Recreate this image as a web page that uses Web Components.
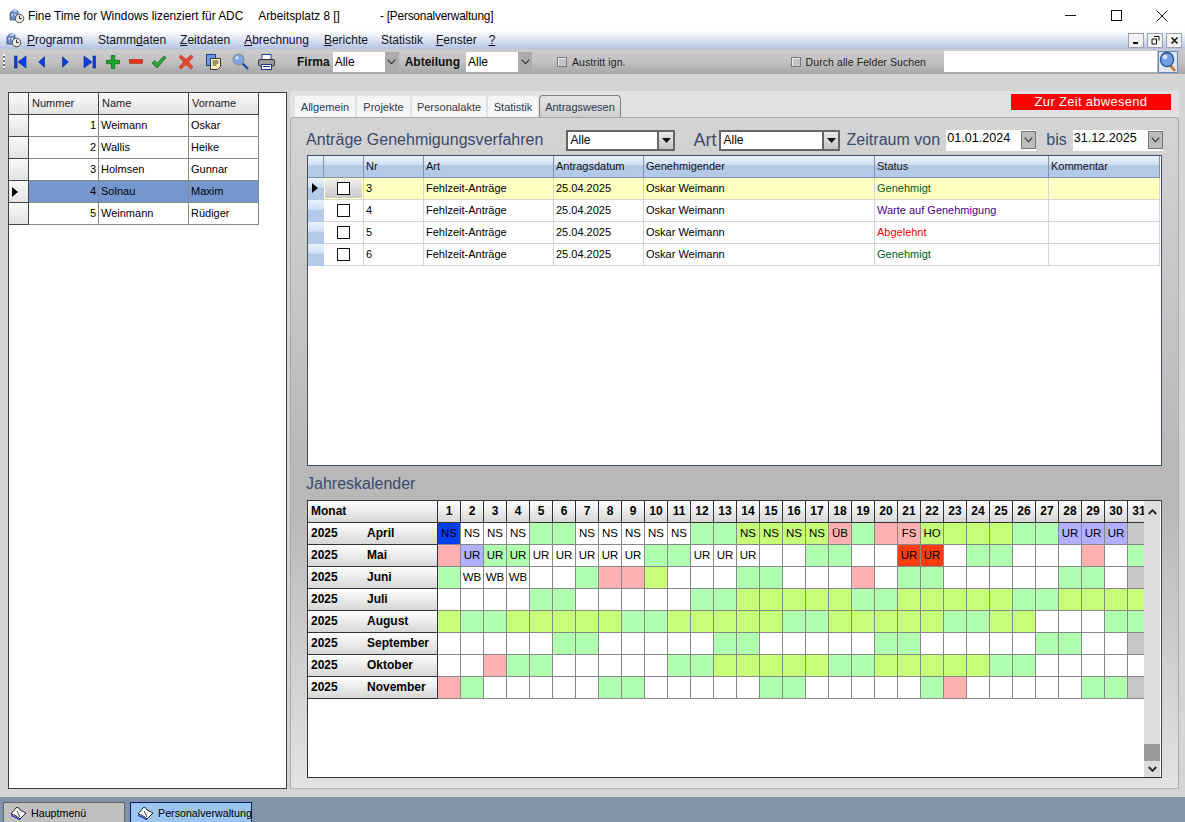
<!DOCTYPE html>
<html lang="de">
<head>
<meta charset="utf-8">
<title>Fine Time for Windows</title>
<style>
  html, body { margin: 0; height: 100%; overflow: hidden; }
  body {
    width: 1185px;
    height: 822px;
    display: flex;
    flex-direction: column;
    background: #d4d4d4;
    font: 11px "Liberation Sans", Arial, sans-serif;
    color: #000;
  }
</style>
</head>
<body>
<ft-titlebar></ft-titlebar>
<ft-menubar></ft-menubar>
<ft-toolbar></ft-toolbar>
<ft-workspace>
  <ft-employee-grid slot="left"></ft-employee-grid>
  <ft-tab-panel>
    <ft-filter-bar></ft-filter-bar>
    <ft-request-grid></ft-request-grid>
    <ft-section-title>Jahreskalender</ft-section-title>
    <ft-year-calendar></ft-year-calendar>
  </ft-tab-panel>
</ft-workspace>
<ft-taskbar></ft-taskbar>

<script>
const ICONS = {
  app: `<svg width="18" height="16" viewBox="0 0 18 16"><path d="M2 5l4-4 4 2v9H2z" fill="#6f8fc8" stroke="#2f3f66" stroke-width=".7"/><path d="M4 2l3-1 3 2-3 1z" fill="#c8d8f2"/><rect x="3.500" y="6" width="1.500" height="1.500" fill="#e8eef8"/><rect x="6.500" y="6" width="1.500" height="1.500" fill="#e8eef8"/><circle cx="11.500" cy="10.500" r="4.300" fill="#e9e9e4" stroke="#4c4c4c"/><path d="M11.500 7.600v3h2.400" fill="none" stroke="#222" stroke-width=".9"/></svg>`,
  first: `<svg width="13" height="14" viewBox="0 0 13 14"><rect x=".5" y="1" width="2.500" height="12" fill="#0a3fe6" stroke="#06237e" stroke-width=".6"/><path d="M12 1v12L4 7z" fill="#0a3fe6" stroke="#06237e" stroke-width=".6"/></svg>`,
  prev: `<svg width="7" height="12" viewBox="0 0 7 12"><path d="M6.500 .7v10.600L.7 6z" fill="#0a3fe6" stroke="#06237e" stroke-width=".6"/></svg>`,
  next: `<svg width="7" height="12" viewBox="0 0 7 12"><path d="M.5 .7v10.600L6.300 6z" fill="#0a3fe6" stroke="#06237e" stroke-width=".6"/></svg>`,
  last: `<svg width="13" height="14" viewBox="0 0 13 14"><path d="M1 1v12l8-6z" fill="#0a3fe6" stroke="#06237e" stroke-width=".6"/><rect x="10" y="1" width="2.500" height="12" fill="#0a3fe6" stroke="#06237e" stroke-width=".6"/></svg>`,
  plus: `<svg width="14" height="14" viewBox="0 0 14 14"><path d="M5.300 .5h3.400v4.800h4.800v3.400H8.700v4.800H5.300V8.700H.5V5.300h4.800z" fill="#1fa62c" stroke="#0c5c16" stroke-width=".7"/></svg>`,
  minus: `<svg width="14" height="5" viewBox="0 0 14 5"><rect x=".4" y=".6" width="13.200" height="3.800" fill="#e8321e" stroke="#a3291c" stroke-width=".6"/></svg>`,
  check: `<svg width="16" height="14" viewBox="0 0 16 14"><path d="M1 8l2.600-2.400 2.500 2.600L13.200 1 15 2.600 6.200 13z" fill="#2ea836" stroke="#1d5e24" stroke-width=".8"/></svg>`,
  cross: `<svg width="16" height="16" viewBox="0 0 16 16"><path d="M1 3l2-2 5 4.500L13 1l2 2-4.500 5 4.500 5-2 2-5-4.500L3 15l-2-2 4.500-5z" fill="#ee4628" stroke="#b03a2a" stroke-width=".7"/></svg>`,
  copy: `<svg width="15" height="16" viewBox="0 0 15 16"><rect x=".5" y=".5" width="9" height="11" fill="#6d98e6" stroke="#1f3c8c"/><path d="M4.500 4.500h10v8l-3 3h-7z" fill="#fdf7b8" stroke="#333"/><path d="M6.500 7h6M6.500 9h6M6.500 11h4" stroke="#333"/></svg>`,
  search: `<svg width="17" height="17" viewBox="0 0 17 17"><path d="M10 10l6 6" stroke="#1d4fa8" stroke-width="2.400"/><circle cx="6.500" cy="6.500" r="5.400" fill="#7ea6e6" stroke="#8a93a3" stroke-width="1.400"/><circle cx="5" cy="5" r="1.800" fill="#cfe0fa"/></svg>`,
  print: `<svg width="17" height="16" viewBox="0 0 17 16"><rect x="4" y=".5" width="9" height="6" fill="#fff" stroke="#1f3c8c"/><rect x=".5" y="5.500" width="16" height="6.500" rx="1.500" fill="#9b9b9b" stroke="#333"/><rect x="3.500" y="10.500" width="10" height="5" fill="#fff" stroke="#1f3c8c"/><path d="M5 12.500h7" stroke="#1f3c8c"/></svg>`,
  lens: `<svg width="20" height="22" viewBox="0 0 20 22"><rect x=".5" y=".5" width="19" height="21" fill="#dfe6f2" stroke="#5f86c6"/><path d="M12 14l5 6" stroke="#d86a1c" stroke-width="2.600"/><ellipse cx="9" cy="8.500" rx="6.600" ry="7" fill="#6f9fe6" stroke="#27518f" stroke-width="1.300"/><ellipse cx="7" cy="6" rx="2.400" ry="2.200" fill="#d8e6fb"/></svg>`,
  book: `<svg width="17" height="14" viewBox="0 0 17 14"><path d="M1 8l6-7c1.500 1 2.500 1.500 3 3l6 3-6 6c-2-2-5-4-9-5z" fill="#fff" stroke="#111" stroke-width=".9"/><path d="M7 5l3 6" stroke="#111" stroke-width=".8"/><path d="M1 9.500c4 1 7 3 9 4.500" fill="none" stroke="#1a22d0" stroke-width="1.200"/></svg>`,
};

class FtTitlebar extends HTMLElement {
  connectedCallback() {
    this.attachShadow({ mode: 'open' }).innerHTML = `
      <style>
        :host { display: flex; align-items: center; height: 31px; background: #fff; font-size: 11.850px; color: #000; flex: none; white-space: nowrap; }
        .logo { margin: 0 0 0 8px; width: 20px; display: flex; }
        .controls { margin-left: auto; display: flex; align-items: center; }
        .controls span { width: 46px; height: 29px; display: flex; align-items: center; justify-content: center; }
      </style>
      <span class="logo">${ICONS.app}</span>
      <span>Fine Time for Windows lizenziert für ADC</span>
      <span style="margin-left:15px">Arbeitsplatz 8 []</span>
      <span style="margin-left:40px;letter-spacing:-.2px">- [Personalverwaltung]</span>
      <span class="controls">
        <span><svg width="11" height="11"><path d="M0 5.500h11" stroke="#111"/></svg></span>
        <span><svg width="11" height="11"><rect x=".5" y=".5" width="10" height="10" fill="none" stroke="#111"/></svg></span>
        <span><svg width="12" height="12"><path d="M.5 .5l11 11M11.500 .5l-11 11" stroke="#111"/></svg></span>
      </span>
    `;
  }
}

class FtMenubar extends HTMLElement {
  connectedCallback() {
    const items = [
      ['P', 'rogramm', 27], ['Stamm', 'd', 'aten', 15], ['Z', 'eitdaten', 14], ['A', 'brechnung', 14],
      ['B', 'erichte', 15], ['Statistik', 13], ['F', 'enster', 13], ['?', '', 12],
    ];
    const link = (it) => {
      if (it.length === 2) return `<a style="margin-left:${it[1]}px">${it[0]}</a>`;
      if (it.length === 4) return `<a style="margin-left:${it[3]}px">${it[0]}<u>${it[1]}</u>${it[2]}</a>`;
      return `<a style="margin-left:${it[2]}px"><u>${it[0]}</u>${it[1]}</a>`;
    };
    this.attachShadow({ mode: 'open' }).innerHTML = `
      <style>
        :host { display: flex; align-items: center; height: 18px; flex: none; font-size: 12px; position: relative;
          background: linear-gradient(#fdfdff, #dfe5f4 45%, #b3c2e4); color: #10131c; }
        .logo { position: absolute; left: 5px; top: 1px; display: flex; }
        a { white-space: nowrap; }
        .mdi { margin-left: auto; margin-right: 3px; display: flex; gap: 3px; }
        .mdi span { width: 16px; height: 15px; background: #f2f2f2; border: 1px solid #9aa0ad; display: flex; align-items: center; justify-content: center; box-sizing: border-box; }
      </style>
      <span class="logo">${ICONS.app}</span>
      ${items.map(link).join('')}
      <span class="mdi">
        <span><svg width="9" height="9"><rect x="1" y="6" width="5" height="2" fill="#111"/></svg></span>
        <span><svg width="9" height="9"><path d="M3 .5h5v4M1 3h4.500v5H1z" fill="none" stroke="#111"/></svg></span>
        <span><svg width="9" height="9"><path d="M1.500 1.500l6 6M7.500 1.500l-6 6" stroke="#111" stroke-width="1.500"/></svg></span>
      </span>
    `;
  }
}

class FtCombo extends HTMLElement {
  static get observedAttributes() { return ['value']; }
  get value() { return this.getAttribute('value') || ''; }
  connectedCallback() {
    this.attachShadow({ mode: 'open' }).innerHTML = `
      <style>
        :host { display: inline-flex; box-sizing: border-box; background: #fff; font-size: 12px; }
        .text { flex: 1; padding-left: 2px; display: flex; align-items: center; min-width: 0; white-space: nowrap; }
        .btn { width: 14px; background: #acacac; display: flex; align-items: center; justify-content: center; flex: none; box-sizing: border-box; }
        :host([kind="drop"]) { border: 2px solid #666; }
        :host([kind="drop"]) .btn { width: 16px; background: linear-gradient(#e8e8e8, #c4c4c4); border-left: 2px solid #666; }
        :host([kind="date"]) { font-size: 12.600px; }
        :host([kind="date"]) .text { align-items: flex-start; padding-left: 1px; line-height: 16px; }
        :host([kind="date"]) .btn { width: 15px; border: 1px solid #777; margin: 1px 0 2px; background: #bcbcbc; }
      </style>
      <span class="text">${this.value}</span>
      <span class="btn">${this.getAttribute('kind') === 'drop'
        ? '<svg width="9" height="5"><path d="M0 0h9L4.500 5z" fill="#111"/></svg>'
        : '<svg width="9" height="6"><path d="M.7 .7L4.500 4.700 8.300 .7" fill="none" stroke="#333" stroke-width="1.100"/></svg>'}</span>
    `;
  }
}

class FtToolbar extends HTMLElement {
  connectedCallback() {
    const tools = [
      ['first', 14, 13], ['prev', 38, 7], ['next', 62, 7], ['last', 83, 13], ['plus', 106, 14], ['minus', 129, 14],
      ['check', 151, 16], ['cross', 178, 16], ['copy', 206, 15], ['search', 232, 17], ['print', 258, 17],
    ];
    let x = 0;
    const buttons = tools.map(([name, left, width]) => {
      const html = `<span class="tool" style="margin-left:${left - x}px;width:${width}px">${ICONS[name]}</span>`;
      x = left + width;
      return html;
    }).join('');
    this.attachShadow({ mode: 'open' }).innerHTML = `
      <style>
        :host { display: flex; align-items: center; height: 25px; flex: none; font-size: 10.500px; position: relative;
          background: linear-gradient(#cbcbcf, #c2c2c2 50%, #a6a6a6); }
        .grip { position: absolute; left: 3px; top: 5px; width: 2px; height: 15px; background: repeating-linear-gradient(#f5f5f5 0 2px, #777 2px 4px); }
        .tool { display: flex; align-items: center; justify-content: center; height: 18px; flex: none; }
        b { font-size: 12px; color: #111; flex: none; }
        ft-combo { height: 20px; flex: none; }
        .check { display: flex; align-items: center; color: #222; white-space: nowrap; letter-spacing: .08px; flex: none; }
        .check i { width: 8px; height: 8px; background: #c4c4c4; border: 1px solid #777; margin-right: 5px; box-shadow: inset 1px 1px 0 #eee; }
        .search { margin-left: 18px; width: 213px; height: 21px; background: #fff; flex: none; }
        .lens { display: flex; margin-left: 1px; flex: none; }
      </style>
      <span class="grip"></span>
      ${buttons}
      <b style="margin-left:${297 - x}px">Firma</b>
      <ft-combo value="Alle" style="margin-left:3px;width:66px"></ft-combo>
      <b style="margin-left:6px">Abteilung</b>
      <ft-combo value="Alle" style="margin-left:6px;width:66px"></ft-combo>
      <span class="check" style="margin-left:25px"><i></i>Austritt ign.</span>
      <span class="check" style="margin-left:165px"><i></i>Durch alle Felder Suchen</span>
      <span class="search"></span>
      <span class="lens">${ICONS.lens}</span>
    `;
  }
}

class FtWorkspace extends HTMLElement {
  connectedCallback() {
    this.attachShadow({ mode: 'open' }).innerHTML = `
      <style>
        :host { display: flex; flex: 1; min-height: 0; padding: 18px 6px 8px 8px; gap: 3px; background: #d4d4d4; }
      </style>
      <slot name="left"></slot>
      <slot></slot>
    `;
  }
}

class FtEmployeeGrid extends HTMLElement {
  connectedCallback() {
    const rows = [
      [1, 'Weimann', 'Oskar'], [2, 'Wallis', 'Heike'], [3, 'Holmsen', 'Gunnar'],
      [4, 'Solnau', 'Maxim'], [5, 'Weinmann', 'Rüdiger'],
    ];
    const body = rows.map(([nr, name, first], i) => {
      const sel = i === 3 ? ' sel' : '';
      return `<div class="ind">${i === 3 ? '<svg width="6" height="10"><path d="M0 0l6 5-6 5z" fill="#000"/></svg>' : ''}</div>
        <div class="c num${sel}">${nr}</div><div class="c${sel}">${name}</div><div class="c${sel}">${first}</div>`;
    }).join('');
    this.attachShadow({ mode: 'open' }).innerHTML = `
      <style>
        :host { display: block; width: 279px; box-sizing: border-box; background: #fff; border: 1px solid #3e3e3e; flex: none; }
        .grid { display: grid; grid-template-columns: 20px 70px 90px 70px; grid-auto-rows: 22px; width: 250px; }
        .ind, .h { background: linear-gradient(#fafafa, #e2e2e2); border-right: 1px solid #444; border-bottom: 1px solid #444; box-sizing: border-box; }
        .h { padding: 0 0 2px 3px; color: #222; display: flex; align-items: center; }
        .ind { padding: 6px 0 0 3px; }
        .ind svg { display: block; }
        .c { background: #fff; border-right: 1px solid #888; border-bottom: 1px solid #888; box-sizing: border-box; padding: 0 0 2px 2px; display: flex; align-items: center; }
        .num { justify-content: flex-end; padding-right: 2px; }
        .sel { background: #7597d0; }
      </style>
      <div class="grid">
        <div class="h"></div><div class="h">Nummer</div><div class="h">Name</div><div class="h">Vorname</div>
        ${body}
      </div>
    `;
  }
}

class FtTabPanel extends HTMLElement {
  connectedCallback() {
    const tabs = [['Allgemein', 60], ['Projekte', 53], ['Personalakte', 74], ['Statistik', 50]];
    this.attachShadow({ mode: 'open' }).innerHTML = `
      <style>
        :host { display: flex; flex-direction: column; flex: 1; min-width: 0; color: #2c3c62; margin-top: -1px; }
        .strip { height: 26px; background: #e1e1e1; display: flex; align-items: flex-end; padding-left: 5px; gap: 2px; position: relative; flex: none; }
        .tab { height: 21px; box-sizing: border-box; background: #f5f5f5; border-radius: 2px 2px 0 0; display: flex; align-items: center; justify-content: center; color: #2f3b50; }
        .active { height: 22px; width: 82px; background: linear-gradient(#e4e4e4, #cfcfcf); border: 1px solid #808080; border-bottom: 0; border-radius: 4px 4px 0 0; margin-left: -1px; }
        .status { position: absolute; right: 8px; top: 3px; width: 160px; height: 16px; background: #f00; color: #fff; font-size: 13px; text-align: center; line-height: 16px; letter-spacing: .3px; }
        .body { flex: 1; min-height: 0; display: flex; flex-direction: column; border: 1px solid #a9a9a9; border-radius: 4px 4px 0 0; border-bottom-color: #b4b4b4;
          padding: 11px 16px 10px 16px; box-sizing: border-box;
          background: linear-gradient(#d4d4d4, #b8b8b8 52%, #b8b8b8 58%, #e2e2e2 100%); }
      </style>
      <div class="strip">
        ${tabs.map(([t, w]) => `<span class="tab" style="width:${w}px">${t}</span>`).join('')}
        <span class="tab active">Antragswesen</span>
        <span class="status">Zur Zeit abwesend</span>
      </div>
      <div class="body"><slot></slot></div>
    `;
  }
}

class FtFilterBar extends HTMLElement {
  connectedCallback() {
    this.attachShadow({ mode: 'open' }).innerHTML = `
      <style>
        :host { display: flex; align-items: center; height: 22px; flex: none; font-size: 16px; color: #3a4a6c; white-space: nowrap; letter-spacing: .03px; margin-left: -1px; }
        .art { font-size: 18px; letter-spacing: 0; }
        ft-combo { flex: none; height: 21px; letter-spacing: 0; color: #000; }
      </style>
      <span>Anträge Genehmigungsverfahren</span>
      <ft-combo kind="drop" value="Alle" style="margin-left:23px;width:109px"></ft-combo>
      <span class="art" style="margin-left:18px">Art</span>
      <ft-combo kind="drop" value="Alle" style="margin-left:3px;width:121px"></ft-combo>
      <span style="margin-left:6px">Zeitraum von</span>
      <ft-combo kind="date" value="01.01.2024" style="margin-left:6px;width:90px"></ft-combo>
      <span style="margin-left:10px">bis</span>
      <ft-combo kind="date" value="31.12.2025" style="margin-left:6px;width:90px"></ft-combo>
    `;
  }
}

class FtRequestGrid extends HTMLElement {
  connectedCallback() {
    const heads = ['', '', 'Nr', 'Art', 'Antragsdatum', 'Genehmigender', 'Status', 'Kommentar'];
    const rows = [
      [3, 'Genehmigt', 'ok'], [4, 'Warte auf Genehmigung', 'wait'], [5, 'Abgelehnt', 'no'], [6, 'Genehmigt', 'ok'],
    ];
    const body = rows.map(([nr, status, cls], i) => {
      const cur = i === 0 ? ' cur' : '';
      return `<div class="ind">${i === 0 ? '<svg width="6" height="10"><path d="M0 0l6 5-6 5z" fill="#000"/></svg>' : ''}</div>
        <div class="c box${cur}"><span class="${i === 0 ? 'raised' : 'flat'}"><i></i></span></div>
        <div class="c${cur}">${nr}</div>
        <div class="c${cur}">Fehlzeit-Anträge</div>
        <div class="c${cur}">25.04.2025</div>
        <div class="c${cur}">Oskar Weimann</div>
        <div class="c ${cls}${cur}">${status}</div>
        <div class="c${cur}"></div>`;
    }).join('');
    this.attachShadow({ mode: 'open' }).innerHTML = `
      <style>
        :host { display: block; height: 311px; margin-top: 4px; flex: none; box-sizing: border-box; background: #fff; border: 1px solid #3f4f68; color: #000; overflow: hidden; }
        .grid { display: grid; grid-template-columns: 16px 40px 60px 130px 90px 231px 174px 111px; grid-auto-rows: 22px; }
        .h, .ind { box-sizing: border-box; background: linear-gradient(#eaf2fc, #cfdff4 42%, #b4c9e8 46%, #b4c9e8); border-right: 1px solid #7f93ad; border-bottom: 1px solid #7f93ad; }
        .h { display: flex; align-items: center; padding: 0 0 2px 2px; color: #111; }
        .ind { border-bottom: 0; border-right: 0; padding: 5px 0 0 4px; }
        .ind svg { display: block; }
        .c { box-sizing: border-box; border-right: 1px solid #d8d4d6; border-bottom: 1px solid #d8d4d6; display: flex; align-items: center; padding: 0 0 2px 2px; background: #fff; }
        .cur { background: #ffffc0; }
        .box { padding: 0; justify-content: center; }
        .box span { display: flex; align-items: center; justify-content: center; flex: 1; align-self: stretch; }
        .raised { background: linear-gradient(#f0f0f0, #c8c8c8); border-radius: 2px; margin: 1px; }
        .box i { width: 13px; height: 13px; box-sizing: border-box; background: #fff; border: 1px solid #111; }
        .ok { color: #005c20; }
        .wait { color: #4c0090; }
        .no { color: #f00; }
      </style>
      <div class="grid">
        ${heads.map((h) => `<div class="h">${h}</div>`).join('')}
        ${body}
      </div>
    `;
  }
}

class FtSectionTitle extends HTMLElement {
  connectedCallback() {
    this.attachShadow({ mode: 'open' }).innerHTML = `
      <style>
        :host { display: block; height: 34px; line-height: 36px; flex: none; font-size: 16px; color: #3a4a6c; margin-left: -1px; }
      </style>
      <slot></slot>
    `;
  }
}

// g weekend, l holiday, p pink, b applied, r rejected, B marked, x no such day, - empty
const CALENDAR = [
  ['April', 'B:NS -:NS -:NS -:NS g g -:NS -:NS -:NS -:NS -:NS g g l:NS l:NS l:NS l:NS p:ÜB g p p:FS l:HO l l l g g b:UR b:UR b:UR x'],
  ['Mai', 'p b:UR g:UR g:UR -:UR -:UR -:UR -:UR -:UR g g -:UR -:UR -:UR - - g g - - r:UR r:UR - g g - - - p - g'],
  ['Juni', 'g -:WB -:WB -:WB - - g p p l - - - g g - - - p - g g - - - - - g g - x'],
  ['Juli', '- - - - g g - - - - - g g l l l l l g g l l l l l g g l l l l'],
  ['August', 'l g g l l l l l g g l l l l l g g l l l l l g g l l - - - g g'],
  ['September', '- - - - - g g - - - - - g g - - - - - g g - - - - - g g - - x'],
  ['Oktober', '- - p g g - - - - - g g l l l l l g g l l l l l g g - - - - -'],
  ['November', 'p g - - - - - g g - - - - - g g - - - - - g p - - - - - g g x'],
];

class FtYearCalendar extends HTMLElement {
  connectedCallback() {
    const days = Array.from({ length: 31 }, (_, i) => `<div class="h day">${i + 1}</div>`).join('');
    const rows = CALENDAR.map(([month, cells]) => {
      const tds = cells.split(' ').map((cell) => {
        const [kind, code = ''] = cell.split(':');
        return `<div class="d k${kind === '-' ? 'w' : kind}">${code}</div>`;
      }).join('');
      return `<div class="h m"><span>2025</span><span>${month}</span></div>${tds}`;
    }).join('');
    this.attachShadow({ mode: 'open' }).innerHTML = `
      <style>
        :host { display: flex; flex: none; height: 278px; box-sizing: border-box; background: #fff; border: 1px solid #333; border-right-color: #444; }
        .view { width: 836px; overflow: hidden; flex: none; }
        .grid { display: grid; grid-template-columns: 130px repeat(31, 23px); grid-auto-rows: 22px; width: 843px; }
        .h { box-sizing: border-box; font-weight: bold; font-size: 12px; color: #000; background: linear-gradient(#fff, #d6d6d6); border-right: 1px solid #333; border-bottom: 1px solid #333; display: flex; align-items: center; padding-bottom: 1px; }
        .day { justify-content: center; }
        .m { padding-left: 3px; }
        .m span:first-child { width: 56px; }
        .head { padding-left: 3px; }
        .d { box-sizing: border-box; border-right: 1px solid #888; border-bottom: 1px solid #888; display: flex; align-items: center; justify-content: center; font-size: 11.500px; color: #000; padding-bottom: 1px; }
        .kw { background: #fff; } .kg { background: #b0ffb0; } .kl { background: #c8ff78; }
        .kp { background: #ffb0b0; } .kb { background: #b0b0ff; } .kr { background: #ff3c10; }
        .kB { background: #0a3ff0; } .kx { background: #c6c6c6; }
        .bar { width: 16px; flex: none; background: #dcdcdc; display: flex; flex-direction: column; }
        .arrow { height: 21px; display: flex; align-items: center; justify-content: center; }
        .thumb { margin-top: auto; height: 17px; background: #9b9b9b; }
        .down { height: 16px; }
      </style>
      <div class="view">
        <div class="grid">
          <div class="h head">Monat</div>${days}
          ${rows}
        </div>
      </div>
      <div class="bar">
        <span class="arrow"><svg width="9" height="6"><path d="M.8 5L4.500 1.200 8.200 5" fill="none" stroke="#222" stroke-width="1.800"/></svg></span>
        <span class="thumb"></span>
        <span class="arrow down"><svg width="9" height="6"><path d="M.8 1L4.500 4.800 8.200 1" fill="none" stroke="#222" stroke-width="1.800"/></svg></span>
      </div>
    `;
  }
}

class FtTaskbar extends HTMLElement {
  connectedCallback() {
    this.attachShadow({ mode: 'open' }).innerHTML = `
      <style>
        :host { display: flex; align-items: flex-end; height: 25px; flex: none; padding-left: 3px; gap: 5px; background: #8093a8; font-size: 10.700px; overflow: hidden; }
        .task { width: 122px; height: 20px; box-sizing: border-box; display: flex; align-items: center; padding-left: 6px; gap: 4px; background: #c0c0c0; border: 1px solid #666; border-bottom: 0; white-space: nowrap; }
        .task svg { flex: none; }
        .on { background: #9cc5ef; border-color: #0a2060; }
      </style>
      <span class="task">${ICONS.book}Hauptmenü</span>
      <span class="task on">${ICONS.book}Personalverwaltung</span>
    `;
  }
}

customElements.define('ft-titlebar', FtTitlebar);
customElements.define('ft-menubar', FtMenubar);
customElements.define('ft-combo', FtCombo);
customElements.define('ft-toolbar', FtToolbar);
customElements.define('ft-workspace', FtWorkspace);
customElements.define('ft-employee-grid', FtEmployeeGrid);
customElements.define('ft-tab-panel', FtTabPanel);
customElements.define('ft-filter-bar', FtFilterBar);
customElements.define('ft-request-grid', FtRequestGrid);
customElements.define('ft-section-title', FtSectionTitle);
customElements.define('ft-year-calendar', FtYearCalendar);
customElements.define('ft-taskbar', FtTaskbar);
</script>
</body>
</html>
